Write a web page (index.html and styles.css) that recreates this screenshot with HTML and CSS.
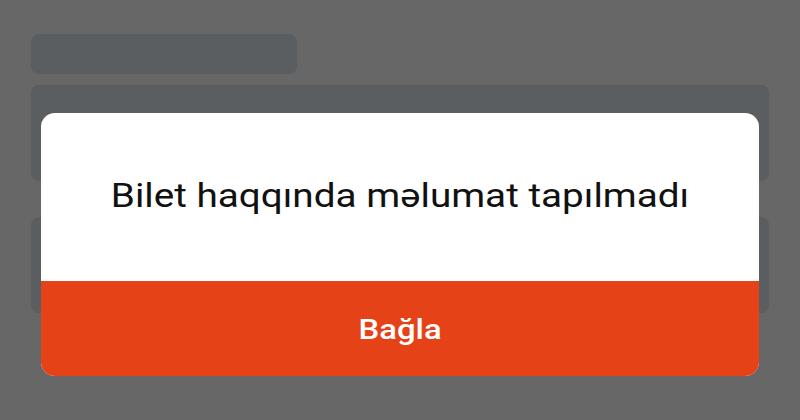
FILE: index.html
```html
<!DOCTYPE html>
<html>
<head>
<meta charset="utf-8">
<link rel="stylesheet" href="styles.css">
</head>
<body>
<div class="page">
  <div class="sk sk-title"></div>
  <div class="sk sk-card"></div>
  <div class="sk sk-card2"></div>
</div>
<div class="overlay">
  <div class="modal">
    <div class="modal-body"><span class="msg">Bilet haqqında məlumat tapılmadı</span></div>
    <button class="modal-btn"><span class="btn-label">Bağla</span></button>
  </div>
</div>
</body>
</html>
```
FILE: styles.css
```css
html, body {
  margin: 0;
  padding: 0;
}
body {
  width: 800px;
  height: 420px;
  background: #676767;
  font-family: Roboto, "Noto Sans", sans-serif;
  overflow: hidden;
  position: relative;
}
.page {
  padding: 34px 31px 0;
  display: flex;
  flex-direction: column;
}
.sk {
  background: #5b5e60;
  border-radius: 8px;
}
.sk-title {
  width: 266px;
  height: 40px;
}
.sk-card {
  margin-top: 11px;
  height: 96px;
}
.sk-card2 {
  margin-top: 36px;
  height: 96px;
}
.overlay {
  position: absolute;
  inset: 0;
  padding: 113px 41px 0;
}
.modal {
  background: #ffffff;
  border-radius: 14px;
  overflow: hidden;
  display: flex;
  flex-direction: column;
}
.modal-body {
  height: 168px;
  display: flex;
  align-items: center;
  justify-content: center;
  font-size: 32.5px;
  color: #111;
  padding-bottom: 2px;
  box-sizing: border-box;
}
.msg {
  display: inline-block;
  transform: scaleX(1.19);
  white-space: nowrap;
}
.modal-btn {
  height: 95px;
  border: none;
  margin: 0;
  background: #e54218;
  color: #fff;
  font-family: Roboto, "Noto Sans", sans-serif;
  font-weight: 500;
  font-size: 28.5px;
  padding: 2px 0 0;
}
.btn-label {
  display: inline-block;
  transform: scaleX(1.15);
}
```
